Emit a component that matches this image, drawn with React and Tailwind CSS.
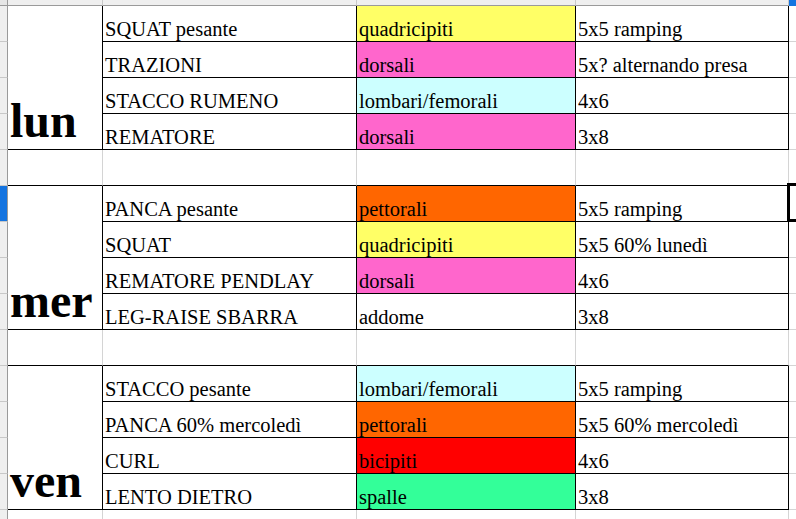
import React from 'react';

const DAYS = [
  {
    label: 'lun',
    rows: [
      ['SQUAT pesante', 'quadricipiti', 'bg-[#ffff66]', '5x5 ramping'],
      ['TRAZIONI', 'dorsali', 'bg-[#ff66cc]', '5x? alternando presa'],
      ['STACCO RUMENO', 'lombari/femorali', 'bg-[#ccffff]', '4x6'],
      ['REMATORE', 'dorsali', 'bg-[#ff66cc]', '3x8'],
    ],
  },
  {
    label: 'mer',
    rows: [
      ['PANCA pesante', 'pettorali', 'bg-[#ff6600]', '5x5 ramping'],
      ['SQUAT', 'quadricipiti', 'bg-[#ffff66]', '5x5 60% lunedì'],
      ['REMATORE PENDLAY', 'dorsali', 'bg-[#ff66cc]', '4x6'],
      ['LEG-RAISE SBARRA', 'addome', 'bg-white', '3x8'],
    ],
  },
  {
    label: 'ven',
    rows: [
      ['STACCO pesante', 'lombari/femorali', 'bg-[#ccffff]', '5x5 ramping'],
      ['PANCA 60% mercoledì', 'pettorali', 'bg-[#ff6600]', '5x5 60% mercoledì'],
      ['CURL', 'bicipiti', 'bg-[#ff0000]', '4x6'],
      ['LENTO DIETRO', 'spalle', 'bg-[#33ff99]', '3x8'],
    ],
  },
];

// row header cell on the far left
function RowHead({ active }) {
  return (
    <div className={`border-r border-b border-r-[#9a9a9a] border-b-[#c8c8c8] ${active ? 'bg-[#1474e0]' : 'bg-[#efefef]'}`} />
  );
}

function Cell({ children, bg = 'bg-white' }) {
  return (
    <div className={`flex items-end overflow-hidden whitespace-nowrap border-r border-b border-black pl-[2px] text-[20.5px] leading-[23px] text-black ${bg}`}>
      {children}
    </div>
  );
}

// empty gridline row between the blocks
function GapRow({ blackBottom }) {
  const b = blackBottom ? 'border-b-black' : 'border-b-[#d4d4d4]';
  return (
    <>
      <RowHead />
      <div className={`border-r border-b border-r-[#d4d4d4] ${b}`} />
      <div className={`border-r border-b border-r-[#d4d4d4] ${b}`} />
      <div className={`border-r border-b border-r-[#d4d4d4] ${b}`} />
      <div className={`border-r border-b border-r-[#d4d4d4] ${b}`} />
      <div className="border-b border-b-[#d4d4d4]" />
    </>
  );
}

function Block({ day, selectFirst }) {
  return day.rows.map((r, i) => (
    <React.Fragment key={r[0]}>
      <RowHead active={selectFirst && i === 0} />
      {i === 0 && (
        <div className="row-span-4 flex items-end border-r border-b border-black pl-[2px] pb-[4px] text-[48px] font-bold leading-none text-black">
          {day.label}
        </div>
      )}
      <Cell>{r[0]}</Cell>
      <Cell bg={r[2]}>{r[1]}</Cell>
      <Cell>{r[3]}</Cell>
      <div className="relative border-b border-b-[#d4d4d4]">
        {selectFirst && i === 0 && (
          <div className="absolute -top-[3px] -left-[2px] h-[39px] w-[40px] border-[3px] border-black" />
        )}
      </div>
    </React.Fragment>
  ));
}

export default function App() {
  return (
    <div
      className="grid h-[519px] w-[796px] overflow-hidden bg-white grid-cols-[8px_95px_254px_219px_213px_1fr] grid-rows-[6px_repeat(15,36px)]"
      style={{ fontFamily: '"Liberation Serif", "Times New Roman", serif' }}
    >
      {/* column headers, only their lower edge is in view */}
      <div className="border-r border-b border-[#9a9a9a] bg-[#e6e6e6]" />
      <div className="border-r border-b border-r-[#c8c8c8] border-b-[#9a9a9a] bg-[#efefef]" />
      <div className="border-r border-b border-r-[#c8c8c8] border-b-[#9a9a9a] bg-[#efefef]" />
      <div className="border-r border-b border-r-[#c8c8c8] border-b-[#9a9a9a] bg-[#efefef]" />
      <div className="border-r border-b border-r-[#c8c8c8] border-b-[#9a9a9a] bg-[#efefef]" />
      <div className="border-b border-b-[#1474e0] bg-[#1474e0]" />

      <Block day={DAYS[0]} />
      <GapRow blackBottom />
      <Block day={DAYS[1]} selectFirst />
      <GapRow blackBottom />
      <Block day={DAYS[2]} />
      <GapRow />
    </div>
  );
}
